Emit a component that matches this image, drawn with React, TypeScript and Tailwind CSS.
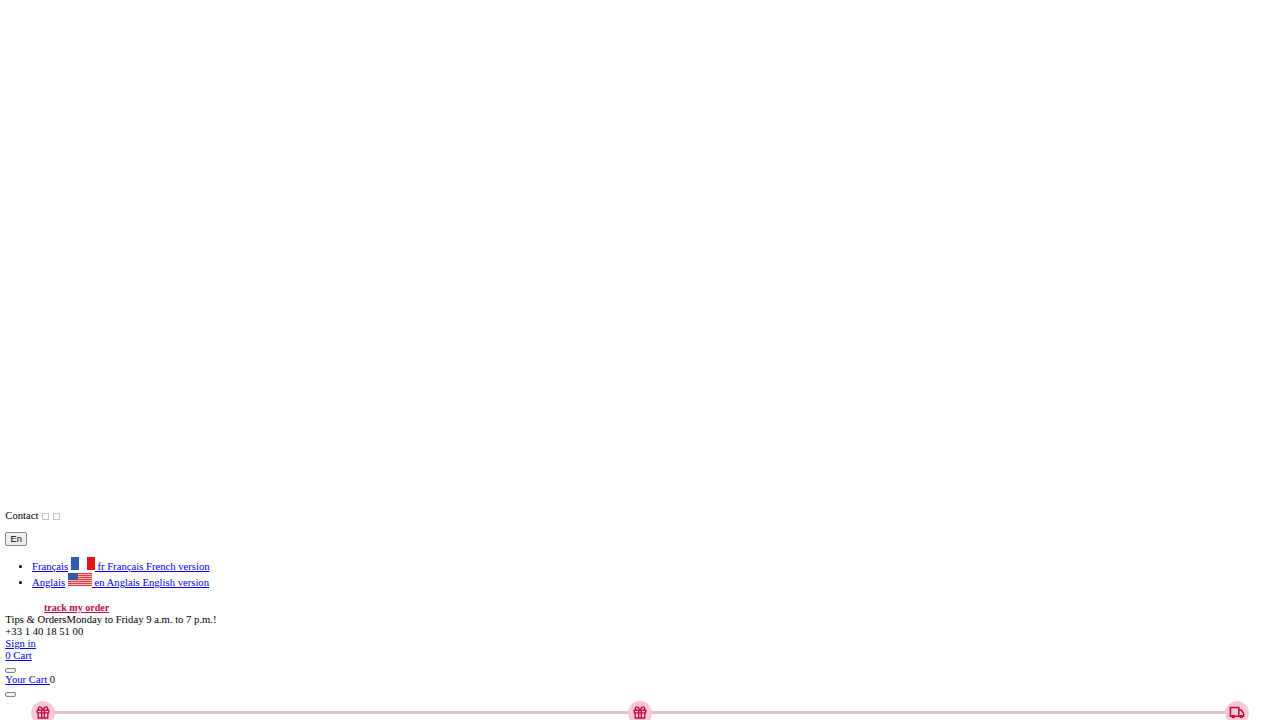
import React from 'react';

const link = 'text-[#0000ee] underline';

function GiftIcon() {
  return (
    <svg viewBox="0 0 14 14" className="w-3.5 h-3.5" fill="none" stroke="#c00640" strokeWidth="1.3" strokeLinejoin="round">
      <path d="M1.2 4.2h11.6v2.6H1.2z M2.2 6.8v5.2h9.6V6.8 M5.7 4.2V12 M8.3 4.2V12" />
      <path d="M7 4C6 1.8 5.1 1 4.2 1a1.5 1.5 0 0 0-.7 3M7 4C8 1.8 8.9 1 9.8 1a1.5 1.5 0 0 1 .7 3" />
    </svg>
  );
}

function TruckIcon() {
  return (
    <svg viewBox="0 0 16 14" className="w-4 h-3.5" fill="none" stroke="#c00640" strokeWidth="1.5">
      <path d="M3 10.2H1.4V1.6h8.4v8.6H5.6 M9.8 4h2.4l2.4 3.3v2.9h-1 M9.8 10.2h1.2" />
      <circle cx="4.3" cy="10.5" r="1.1" />
      <circle cx="12.2" cy="10.5" r="1.1" />
    </svg>
  );
}

function Step({ children }: { children: React.ReactNode }) {
  return (
    <div className="w-6 h-6 shrink-0 rounded-full bg-[#f6c9d5] flex items-center justify-center">
      {children}
    </div>
  );
}

function FrenchFlag() {
  return (
    <svg viewBox="0 0 24 13" className="inline-block w-6 h-[13px] align-baseline" preserveAspectRatio="none">
      <path fill="#2f5caf" d="M0 0h8v13H0z" />
      <path fill="#fff" d="M8 0h8v13H8z" />
      <path fill="#df1719" d="M16 0h8v13h-8z" />
    </svg>
  );
}

function AmericanFlag() {
  return (
    <svg viewBox="0 0 24 13" className="inline-block w-6 h-[13px] align-baseline" preserveAspectRatio="none">
      <path fill="#f3b9bb" d="M0 0h24v13H0z" />
      <path
        stroke="#df3a3e"
        strokeWidth="1"
        d="M0 .5h24M0 2.5h24M0 4.5h24M0 6.5h24M0 8.5h24M0 10.5h24M0 12.5h24"
      />
      <path fill="#3158a0" d="M0 0h10v7H0z" />
      <path stroke="#5873b0" strokeWidth=".5" strokeDasharray=".7 1" d="M1 1.5h8M1 3.5h8M1 5.5h8" />
    </svg>
  );
}

function MissingGlyph() {
  return <span className="inline-block w-[7px] h-[7px] border border-[#c4c4c4] align-[-1px]"></span>;
}

function SmallButton() {
  return <button className="block w-[11px] h-[5px] rounded-[2px] border border-[#858585] bg-[#efefef]"></button>;
}

export default function App() {
  return (
    <div className="h-[720px] overflow-hidden bg-white px-[5.33px] pt-[510px] font-['Liberation_Serif',serif] text-[10.667px] leading-[12px] text-black">
      <p className="h-3">
        Contact <span className="ml-px"><MissingGlyph /></span> <span className="ml-px"><MissingGlyph /></span>
      </p>
      <button className="mt-[10px] block w-[22px] h-3.5 rounded-[2px] border border-[#858585] bg-[#efefef] font-['Liberation_Sans',sans-serif] text-[9.4px] leading-[12px]">
        En
      </button>
      <ul className="mt-[11px] list-disc pl-[26.67px]">
        <li className="h-4 leading-4">
          <a href="#" className={link}>Français</a>{' '}
          <a href="#" className={link}><FrenchFlag /> fr Français French version</a>
        </li>
        <li className="h-4 leading-4">
          <a href="#" className={link}>Anglais</a>{' '}
          <a href="#" className={link}><AmericanFlag /> en Anglais English version</a>
        </li>
      </ul>
      <div className="mt-[13px] pl-[38.67px] h-3">
        <a href="#" className="block w-fit origin-left scale-x-[1.075] text-[9.333px] leading-[12px] font-bold text-[#bc0c42] underline">
          track my order
        </a>
      </div>
      <div>Tips &amp; OrdersMonday to Friday 9 a.m. to 7 p.m.!</div>
      <div>+33 1 40 18 51 00</div>
      <div><a href="#" className={link}>Sign in</a></div>
      <div><a href="#" className={link}>0 Cart</a></div>
      <div className="h-3 pt-[6px]"><SmallButton /></div>
      <div>
        <a href="#" className={link}>Your Cart </a>0
      </div>
      <div className="h-3 pt-[6px]"><SmallButton /></div>
      <div className="mt-[2.5px] ml-[25.67px] mr-[25.67px] flex items-center">
        <Step><GiftIcon /></Step>
        <div className="h-[3px] flex-1 bg-[#dfc3cb]"></div>
        <Step><GiftIcon /></Step>
        <div className="h-[3px] flex-1 bg-[#dfc3cb]"></div>
        <Step><TruckIcon /></Step>
      </div>
    </div>
  );
}
